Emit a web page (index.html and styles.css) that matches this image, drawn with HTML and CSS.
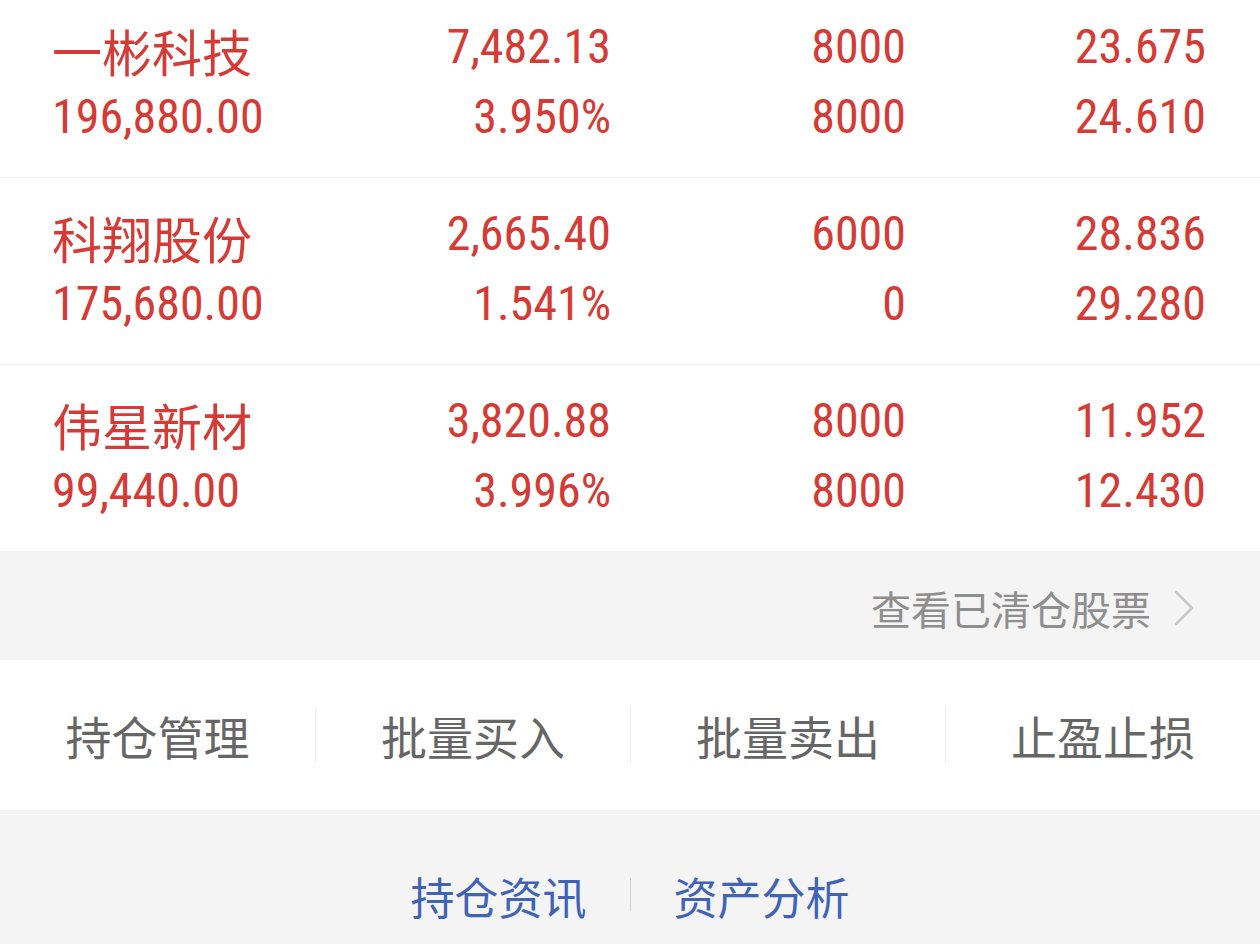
FILE: index.html
```html
<!DOCTYPE html>
<html lang="zh-CN">
<head>
<meta charset="utf-8">
<title>持仓</title>
<link rel="stylesheet" href="styles.css">
</head>
<body>
<div class="page">
  <div class="holdings">
    <div class="row first">
      <div class="cell name">一彬科技</div>
      <div class="cell num">7,482.13</div>
      <div class="cell num">8000</div>
      <div class="cell num">23.675</div>
      <div class="cell num left">196,880.00</div>
      <div class="cell num">3.950%</div>
      <div class="cell num">8000</div>
      <div class="cell num">24.610</div>
    </div>
    <div class="row">
      <div class="cell name">科翔股份</div>
      <div class="cell num">2,665.40</div>
      <div class="cell num">6000</div>
      <div class="cell num">28.836</div>
      <div class="cell num left">175,680.00</div>
      <div class="cell num">1.541%</div>
      <div class="cell num">0</div>
      <div class="cell num">29.280</div>
    </div>
    <div class="row last">
      <div class="cell name">伟星新材</div>
      <div class="cell num">3,820.88</div>
      <div class="cell num">8000</div>
      <div class="cell num">11.952</div>
      <div class="cell num left">99,440.00</div>
      <div class="cell num">3.996%</div>
      <div class="cell num">8000</div>
      <div class="cell num">12.430</div>
    </div>
  </div>

  <div class="cleared">
    <span class="cleared-text">查看已清仓股票</span>
    <svg class="chevron" width="22" height="38" viewBox="0 0 22 38">
      <polyline points="3,3 19,19 3,35" fill="none" stroke="#c9c9c9" stroke-width="2.6" stroke-linecap="round" stroke-linejoin="round"/>
    </svg>
  </div>

  <div class="actions">
    <div class="action">持仓管理</div>
    <div class="action">批量买入</div>
    <div class="action">批量卖出</div>
    <div class="action">止盈止损</div>
  </div>

  <div class="links">
    <span class="link">持仓资讯</span>
    <span class="link-sep"></span>
    <span class="link">资产分析</span>
  </div>
</div>
</body>
</html>
```

FILE: styles.css
```css
html, body {
  margin: 0;
  padding: 0;
  background: #ffffff;
}

body {
  font-family: "Noto Sans CJK SC", "Noto Sans", sans-serif;
  overflow: hidden;
}

.page {
  width: 1260px;
  height: 944px;
  overflow: hidden;
}

.holdings {
  background: #ffffff;
}

.row {
  display: grid;
  grid-template-columns: 278px 281px 295px 300px;
  padding: 21px 54px 25px 52px;
  border-bottom: 1px solid #efefef;
  color: #d53a35;
}

.row.first {
  margin-top: -9px;
}

.row.last {
  border-bottom: none;
}

.cell {
  height: 70px;
  white-space: nowrap;
}

.name {
  font-family: "Noto Sans CJK SC", sans-serif;
  font-size: 50px;
  line-height: 64px;
  padding-top: 6px;
  height: 64px;
  text-align: left;
}

.num {
  font-family: "Liberation Sans Narrow", "Roboto Condensed", "DejaVu Sans Condensed", sans-serif;
  font-size: 48px;
  line-height: 70px;
  text-align: right;
}

.num.left {
  text-align: left;
}

.cleared {
  height: 109px;
  background: #f4f4f4;
  display: flex;
  justify-content: flex-end;
  align-items: center;
  gap: 22px;
  padding: 4px 65px 0 0;
  box-sizing: border-box;
}

.cleared-text {
  font-size: 40px;
  line-height: 50px;
  color: #8e8e8e;
}

.chevron {
  display: block;
}

.actions {
  height: 150px;
  background: #ffffff;
  display: grid;
  grid-template-columns: repeat(4, 1fr);
  align-items: center;
}

.action {
  height: 55px;
  line-height: 55px;
  font-size: 46px;
  color: #666666;
  text-align: center;
  border-left: 1px solid #ececec;
}

.action:first-child {
  border-left: none;
}

.links {
  height: 134px;
  background: #f4f4f4;
  display: flex;
  justify-content: center;
  align-items: flex-start;
  gap: 43px;
  padding-top: 61px;
  box-sizing: border-box;
}

.link {
  font-size: 44px;
  line-height: 50px;
  color: #4063b6;
}

.link-sep {
  width: 1px;
  height: 33px;
  margin-top: 7px;
  background: #cfcfcf;
}
```
